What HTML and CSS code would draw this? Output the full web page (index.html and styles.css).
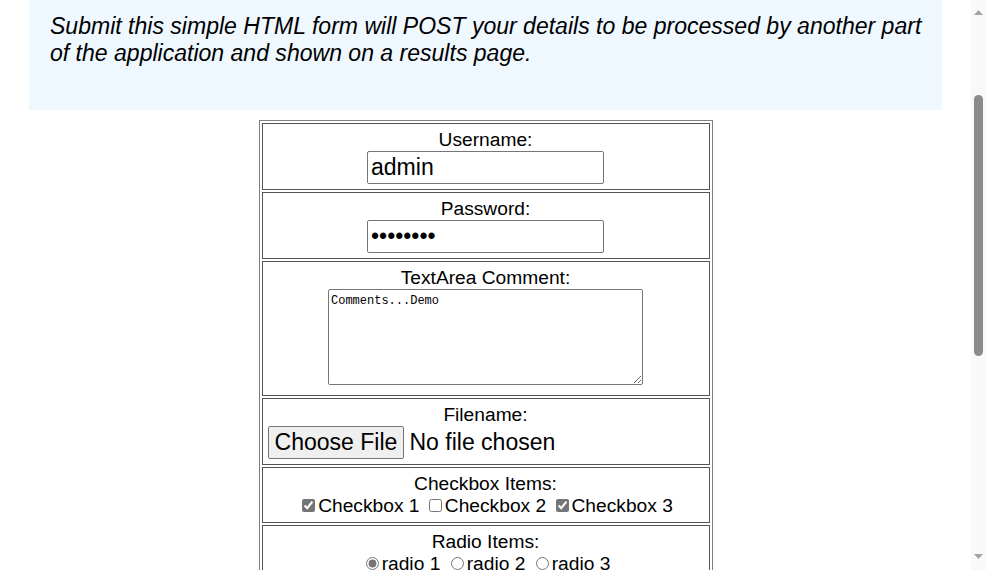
FILE: index.html
```html
<!DOCTYPE html>
<html lang="en">
<head>
<meta charset="utf-8">
<title>HTML Form Example</title>
<link rel="stylesheet" href="styles.css">
</head>
<body>
<div class="window">
  <main class="content">
    <div class="page">
      <div class="explanation">
        <p class="intro">Submit this simple HTML form will POST your details to be processed by another part of the application and shown on a results page.</p>
      </div>
      <form class="form" action="#" method="post">
        <table class="form-table">
          <tr><td>Username:<br><input class="text-input" type="text" name="username" value="admin"></td></tr>
          <tr><td>Password:<br><input class="text-input" type="password" name="password" value="password"></td></tr>
          <tr><td>TextArea Comment:<br><textarea class="comment" name="comments">Comments...Demo</textarea></td></tr>
          <tr><td>Filename:<br><input class="file-input" type="file" name="filename"></td></tr>
          <tr><td>Checkbox Items:<br><label><input type="checkbox" name="cb1" checked>Checkbox 1</label> <label><input type="checkbox" name="cb2">Checkbox 2</label> <label><input type="checkbox" name="cb3" checked>Checkbox 3</label></td></tr>
          <tr><td>Radio Items:<br><label><input type="radio" name="radioval" checked>radio 1</label> <label><input type="radio" name="radioval">radio 2</label> <label><input type="radio" name="radioval">radio 3</label></td></tr>
        </table>
      </form>
    </div>
  </main>
  <div class="scrollbar" aria-hidden="true">
    <svg class="sb-arrow sb-up" width="9" height="5" viewBox="0 0 9 5"><path d="M0 5 L4.5 0 L9 5 Z" fill="#a3a3a3"/></svg>
    <div class="sb-thumb"></div>
    <svg class="sb-arrow sb-down" width="9" height="5" viewBox="0 0 9 5"><path d="M0 0 L9 0 L4.5 5 Z" fill="#a3a3a3"/></svg>
  </div>
</div>
</body>
</html>
```
FILE: styles.css
```css
html, body {
  margin: 0;
  padding: 0;
}
body {
  font-family: "Liberation Sans", Arial, sans-serif;
  font-size: 19.2px;
  color: #000;
  background: #fff;
}
.window {
  display: flex;
  height: 570px;
  overflow: hidden;
}
.content {
  flex: 1;
  min-width: 0;
  overflow: hidden;
}
.page {
  padding: 0 29px;
}
.explanation {
  background: #eff7ff;
  padding: 13px 8px 43px 21px;
}
.intro {
  margin: 0;
  font-style: italic;
  font-size: 23.04px;
  line-height: 27px;
}
.form {
  margin-top: 10px;
}
.form-table {
  margin: 0 auto;
  width: 453px;
  border: 1px solid #808080;
  border-spacing: 2px;
}
.form-table td {
  border: 1px solid #555;
  padding: 5px;
  text-align: center;
  line-height: 22px;
}
input[type="checkbox"], input[type="radio"] {
  accent-color: #757575;
}
.text-input {
  box-sizing: border-box;
  width: 237px;
  height: 33px;
  padding: 0 3px;
  font-family: "Liberation Sans", Arial, sans-serif;
  font-size: 23.04px;
  border: 1px solid #767676;
  border-radius: 2px;
  vertical-align: top;
}
.comment {
  box-sizing: border-box;
  width: 315px;
  height: 96px;
  padding: 4px 2px 2px;
  font-family: "Liberation Mono", monospace;
  font-size: 12px;
  border: 1px solid #767676;
  border-radius: 2px;
  resize: both;
}
.file-input {
  display: block;
  width: 436px;
  font-family: "Liberation Sans", Arial, sans-serif;
  font-size: 23.04px;
  text-align: left;
}
.file-input::file-selector-button {
  font-family: "Liberation Sans", Arial, sans-serif;
  font-size: 23.04px;
  height: 33px;
  padding: 0 6px;
  margin-right: 5px;
  border: 1px solid #767676;
  border-radius: 2px;
  background: #efefef;
}
.scrollbar {
  flex: 0 0 15px;
  display: flex;
  flex-direction: column;
  align-items: center;
  background: #f9f9f9;
}
.sb-arrow {
  display: block;
  flex: none;
}
.sb-up {
  margin-top: 10px;
}
.sb-thumb {
  flex: none;
  width: 9px;
  height: 261px;
  margin-top: 80px;
  border-radius: 5px;
  background: #8b8b8b;
}
.sb-down {
  margin-top: auto;
  margin-bottom: 11px;
}
```
